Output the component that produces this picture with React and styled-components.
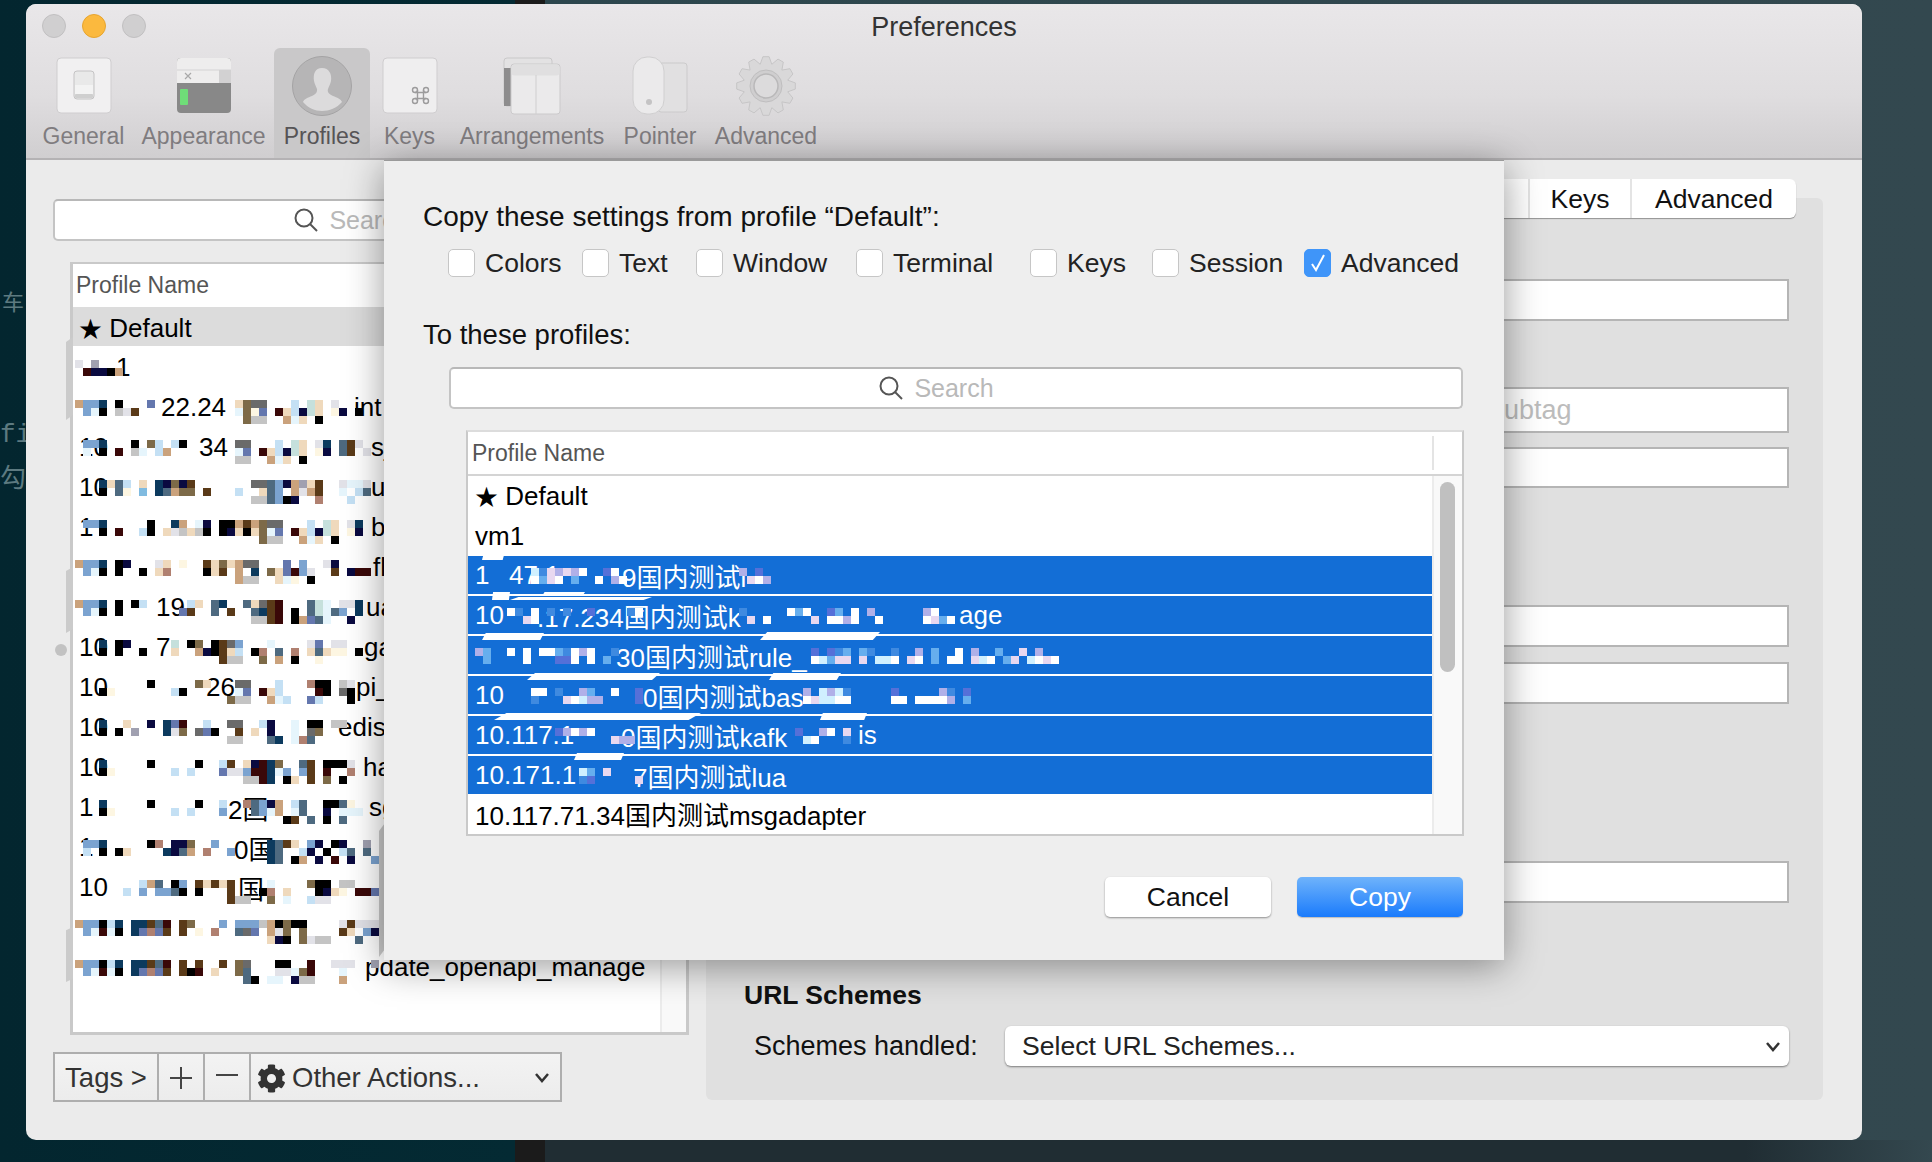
import React from 'react';
import styled, { createGlobalStyle } from 'styled-components';
import { FaCog } from 'react-icons/fa';

const Global = createGlobalStyle`
  html, body { margin: 0; padding: 0; }
  body { width: 1932px; height: 1162px; overflow: hidden; font-family: "Liberation Sans", "Noto Sans CJK SC", "DejaVu Sans", sans-serif; }
  * { box-sizing: border-box; }
`;

const Desktop = styled.div`
  position: relative;
  width: 1932px;
  height: 1162px;
  overflow: hidden;
  background: linear-gradient(90deg, #03262f 0, #042a33 515px, #1b1b1b 515px, #1b1b1b 545px, #2c464d 545px, #33484f 1932px);
  &::after {
    content: "";
    position: absolute;
    left: 545px;
    right: 0;
    bottom: 0;
    height: 22px;
    background: linear-gradient(90deg, #202d33 0, #202d33 1200px, #34484f 1387px);
  }
`;

const BackText = styled.span`
  position: absolute;
  left: ${p => p.$x}px;
  top: ${p => p.$y}px;
  color: #5d7a80;
  font-size: ${p => p.$size || 26}px;
  line-height: 30px;
  font-family: "Liberation Mono", "Noto Sans CJK SC", monospace;
`;

const Window = styled.div`
  position: absolute;
  left: 26px;
  top: 4px;
  width: 1836px;
  height: 1136px;
  border-radius: 10px;
  overflow: hidden;
  background: #ebebeb;
`;

const Chrome = styled.div`
  height: 156px;
  background: linear-gradient(180deg, #e9e7e9 0, #dfdddf 60%, #d0ced0 100%);
  border-bottom: 2px solid #b4b2b4;
`;

const TitleBar = styled.div`
  position: relative;
  height: 44px;
  display: flex;
  align-items: center;
  padding-left: 16px;
  gap: 16px;
`;

const Light = styled.div`
  width: 24px;
  height: 24px;
  margin-top: -1px;
  border-radius: 50%;
  background: ${p => p.$on ? '#fbb93e' : '#d0cfd0'};
  border: 1px solid ${p => p.$on ? '#e6a42f' : '#c0bfc0'};
`;

const Title = styled.div`
  position: absolute;
  left: 0;
  right: 0;
  top: 8px;
  text-align: center;
  font-size: 27px;
  line-height: 30px;
  color: #333;
`;

const Tools = styled.div`
  display: flex;
  padding-left: 8px;
  height: 110px;
`;

const Tool = styled.div`
  width: ${p => p.$w}px;
  display: flex;
  flex-direction: column;
  align-items: center;
  padding-top: 8px;
  border-radius: 6px 6px 0 0;
  background: ${p => p.$active ? '#c9c8c9' : 'transparent'};
  svg { display: block; }
`;

const ToolIcon = styled.div`
  height: 60px;
  display: flex;
  align-items: center;
  justify-content: center;
`;

const ToolLabel = styled.div`
  margin-top: 6px;
  font-size: 23px;
  line-height: 28px;
  white-space: nowrap;
  color: ${p => p.$active ? '#565456' : '#7f7c7f'};
`;

const Body = styled.div`
  display: flex;
  align-items: flex-start;
  padding-left: 27px;
`;

const LeftCol = styled.div`
  width: 636px;
  padding-top: 39px;
  flex: none;
`;

const SearchBox = styled.div`
  height: 42px;
  width: ${p => p.$w}px;
  margin: ${p => p.$mt || 0}px 0 0 ${p => p.$ml}px;
  padding-right: ${p => p.$pr || 0}px;
  background: #fff;
  border: 2px solid #c4c4c4;
  border-top-color: #b8b8b8;
  border-radius: 5px;
  display: flex;
  align-items: center;
  justify-content: center;
  gap: 10px;
  font-size: 25px;
  color: #b9b9b9;
`;

const ProfileTable = styled.div`
  margin: 21px 0 0 17px;
  width: 619px;
  height: 773px;
  border: 3px solid #c9c9c9;
  border-top-width: 2px;
  background: #fff;
  display: flex;
`;

const ListCol = styled.div`
  flex: 1;
  position: relative;
  min-width: 0;
`;

const Gutter = styled.div`
  width: 26px;
  flex: none;
  background: #f9f9f9;
  border-left: 2px solid #ececec;
`;

const HeadCell = styled.div`
  height: ${p => p.$h}px;
  padding-left: 3px;
  display: flex;
  align-items: center;
  font-size: 23px;
  color: #555;
`;

const Row = styled.div`
  position: relative;
  height: ${p => p.$h || 40}px;
  display: flex;
  align-items: center;
  padding: ${p => p.$down || 0}px 0 ${p => p.$up || 0}px;
  font-size: 26px;
  white-space: nowrap;
  color: ${p => p.$sel ? '#fff' : '#000'};
  background: ${p => p.$sel ? '#136ed6' : p.$dim ? '#dcdcdc' : 'transparent'};
  background-clip: padding-box;
  border-bottom: ${p => p.$sel ? '2px solid #fff' : '0'};
`;

const Frag = styled.span`
  flex: none;
  display: inline-block;
  width: ${p => p.$w}px;
`;

const Star = styled.span`
  font-size: 23px;
`;

const MosaicSvg = styled.svg`
  position: absolute;
  left: ${p => p.$left}px;
  top: ${p => p.$top}px;
  display: block;
`;

const Sliver = styled.div`
  position: absolute;
  left: ${p => p.$x}px;
  top: ${p => p.$y}px;
  width: ${p => p.$w}px;
  height: ${p => p.$h}px;
  background: #cbcbcb;
  clip-path: polygon(0 6%, 100% 0, 100% 94%, 0 100%);
`;

const Dot = styled.div`
  position: absolute;
  left: ${p => p.$x}px;
  top: ${p => p.$y}px;
  width: 12px;
  height: 12px;
  border-radius: 50%;
  background: #c2c2c2;
`;

const Slash = styled.div`
  position: absolute;
  left: ${p => p.$x}px;
  top: ${p => p.$y}px;
  width: ${p => p.$w}px;
  height: ${p => p.$h}px;
  background: #fff;
  clip-path: polygon(6% 0, 100% 0, 94% 100%, 0 100%);
`;

const ActionBar = styled.div`
  margin-top: 17px;
  width: 509px;
  height: 50px;
  display: flex;
  border: 2px solid #aeaeae;
  background: linear-gradient(180deg, #f3f3f3, #ececec);
`;

const ActionCell = styled.div`
  width: ${p => p.$w}px;
  flex: ${p => p.$grow ? 1 : 'none'};
  display: flex;
  align-items: center;
  justify-content: ${p => p.$grow ? 'flex-start' : 'center'};
  gap: 6px;
  padding: ${p => p.$grow ? '2px 10px 0 6px' : '2px 0 0'};
  border-right: ${p => p.$grow ? '0' : '2px solid #aeaeae'};
  font-size: 27.5px;
  color: #333;
`;

const Chevron = styled.svg`
  margin-left: auto;
  display: block;
`;

const RightBox = styled.div`
  margin: 38px 0 0 17px;
  width: 1117px;
  height: 902px;
  background: #e0e0e0;
  border-radius: 6px;
  display: flex;
  flex-direction: column;
  align-items: flex-end;
  padding-right: 34px;
`;

const TabGroup = styled.div`
  margin: -19px -7px 0 0;
  height: 39px;
  display: flex;
  background: #fff;
  border-radius: 6px;
  box-shadow: 0 1px 1px rgba(0, 0, 0, .35);
`;

const Tab = styled.div`
  width: ${p => p.$w}px;
  padding-top: 2px;
  display: flex;
  align-items: center;
  justify-content: center;
  font-size: 26.5px;
  color: #111;
  border-left: 2px solid #e4e4e4;
`;

const Field = styled.div`
  margin-top: ${p => p.$mt}px;
  width: 784px;
  height: ${p => p.$h}px;
  background: #fff;
  border: 2px solid #b5b5b5;
  padding-left: ${p => p.$pl || 0}px;
  display: flex;
  align-items: center;
  font-size: 27px;
  color: #bcbcbc;
`;

const SchemeHead = styled.div`
  margin-top: 77px;
  align-self: flex-start;
  margin-left: 38px;
  font-size: 26.5px;
  line-height: 30px;
  font-weight: bold;
  color: #111;
`;

const SchemeRow = styled.div`
  margin-top: 16px;
  align-self: stretch;
  display: flex;
  align-items: center;
  justify-content: space-between;
  padding-left: 48px;
  font-size: 27px;
  color: #111;
`;

const SchemeSelect = styled.div`
  width: 784px;
  height: 40px;
  background: #fff;
  border-radius: 6px;
  padding: 1px 8px 0 17px;
  display: flex;
  align-items: center;
  box-shadow: 0 1px 2px rgba(0, 0, 0, .45);
  font-size: 26.6px;
  color: #222;
`;

const Modal = styled.div`
  position: absolute;
  left: 358px;
  top: 156px;
  width: 1120px;
  height: 800px;
  padding: 41px 0 0 39px;
  background: #eee;
  border-top: 1px solid #9a9a9a;
  box-shadow: 0 6px 36px rgba(0, 0, 0, .4);
  font-size: 26.5px;
  color: #111;
`;

const Line = styled.div`
  font-size: ${p => p.$size}px;
  line-height: 30px;
  margin-top: ${p => p.$mt || 0}px;
`;

const Checks = styled.div`
  display: flex;
  margin: 17px 0 0 25px;
  height: 28px;
`;

const Check = styled.div`
  width: ${p => p.$w}px;
  flex: none;
  display: flex;
  align-items: center;
  gap: 10px;
  white-space: nowrap;
  color: #222;
`;

const Box = styled.div`
  width: 27px;
  height: 28px;
  flex: none;
  border-radius: 5px;
  background: ${p => p.$on ? '#3f95f9' : '#fff'};
  border: 1px solid ${p => p.$on ? '#3f95f9' : '#c6c6c6'};
  display: flex;
  align-items: center;
  justify-content: center;
`;

const CopyTable = styled.div`
  margin: 21px 0 0 43px;
  width: 998px;
  height: 406px;
  border: 2px solid #c9c9c9;
  border-top-color: #dcdcdc;
  background: #fff;
  display: flex;
  flex-direction: column;
`;

const CopyHead = styled.div`
  height: 44px;
  flex: none;
  display: flex;
  align-items: center;
  justify-content: space-between;
  padding-left: 4px;
  border-bottom: 2px solid #d4d4d4;
  font-size: 23px;
  color: #555;
`;

const HeadMark = styled.div`
  width: 30px;
  height: 34px;
  border-left: 2px solid #e4e4e4;
`;

const CopyBody = styled.div`
  flex: 1;
  display: flex;
  min-height: 0;
`;

const CopyRows = styled.div`
  flex: 1;
  position: relative;
`;

const ScrollCol = styled.div`
  width: 30px;
  flex: none;
  background: #f9f9f9;
  border-left: 2px solid #ececec;
  padding: 6px 0 0 6px;
`;

const Thumb = styled.div`
  width: 15px;
  height: 190px;
  border-radius: 8px;
  background: #c0c0c0;
`;

const Buttons = styled.div`
  margin-top: 41px;
  padding-right: 41px;
  display: flex;
  justify-content: flex-end;
  gap: 26px;
`;

const Button = styled.div`
  width: 166px;
  height: 40px;
  border-radius: 5px;
  display: flex;
  align-items: center;
  justify-content: center;
  color: ${p => p.$primary ? '#fff' : '#111'};
  background: ${p => p.$primary ? 'linear-gradient(180deg, #6fb3fb, #1a7bfc)' : '#fff'};
  box-shadow: ${p => p.$primary ? '0 1px 1px rgba(0,0,0,.2)' : '0 1px 2px rgba(0,0,0,.4)'};
`;

const palette = {
  a: '#caa27c', b: '#7ba3d0', c: '#0c3a5e', k: '#000', l: '#c4e0f4', w: '#e6f5fc', g: '#c4c4c4',
  d: '#3a0808', m: '#5a3a18', n: '#0a0a40', o: '#7d6a48', p: '#6477ae', s: '#4e6a80', t: '#efd9bc',
  u: '#c5e0dc', v: '#6a6a6a', y: '#fdf6e2', r: '#b08070', e: '#e2e2e8', h: '#a0a0b0', x: '#80bbe0',
  W: '#fff', L: '#66aeee', D: '#3f8ae0', V: '#e8d8f0', P: '#b0b0e8', I: '#5570d8', C: '#d0f0ff',
};

const Mosaic = ({ lines, left, top }) => {
  const cols = Math.max(...lines.map(l => l.length));
  return (
    <MosaicSvg $left={left} $top={top} width={cols * 8} height={lines.length * 8} shapeRendering="crispEdges">
      {lines.map((line, y) => line.split('').map((ch, x) => palette[ch]
        ? <rect key={x + '-' + y} x={x * 8} y={y * 8} width="8" height="8" fill={palette[ch]} />
        : null))}
    </MosaicSvg>
  );
};

const Frags = ({ items }) => {
  if (!items.length) return null;
  return (
    <>
      <Frag $w={items[0][0]} />
      {items.map((it, i) => (
        <Frag key={i} $w={i < items.length - 1 ? items[i + 1][0] - it[0] : 'auto'}>{it[1]}</Frag>
      ))}
    </>
  );
};

const DefaultName = () => <><Star>★</Star> Default</>;

const leftRows = [
  { f: [[43, '1']], m: ['e.h', '.dnnka'] },
  { f: [[88, '22.24'], [281, 'int']], m: ['abbc.k...p..........tovv...l.ut.e', '.bwk.gem............woyp.dtlnut.yn.k', '.....................ogg..awt.k'] },
  { f: [[6, '10'], [126, '34'], [298, 's_']], m: ['.bbc...k.ol.lk......vv...l.ut.ec.sme', '.w.k.d.gw.la........wp.dtlnut.yn.sm.e', '....................gg..awt.k'] },
  { f: [[6, '10'], [298, 'ul']], m: ['...ctsl.t.cnonm.......vvsbnahtm..ewwe', '...k.sy.x.csaoo.m...l..tsb.aeam..w.ls', '......................ggsbkn..r...l'] },
  { f: [[6, '1'], [298, 'ba']], m: ['.bbc.....k..ca.wn.kkamaovv...l.ut.ec', '...k.d..lk.tegtgk.kntktowp.dtlnut.yn', '.......................ogg..awt.k'] },
  { f: [[300, 'fl']], m: ['abbc.kn...et.y..mtotavv...p.b..en', '.bwk.k..k.tr....ktm.a.c.otpdbe..m.ndd', '....................agg..twy.k'] },
  { f: [[83, '19'], [293, 'ua']], m: ['abbc.k.kl.....lt.sc..stvmd...suw.eec', '.bwk.k.......pm..s.m..scmd.k.suwsb.c', '......................ggmd.kapsw..n'] },
  { f: [[6, '10'], [83, '7'], [291, 'ga']], m: ['...c.kn.....u.ko.kmvb...w....ep.ee', '...k.k..k...t..ankmtl.kr.s.r.tstyy.k', '..................mgg..o.a.k..y'] },
  { f: [[6, '10'], [133, '26'], [283, 'pi_a']], m: ['.........k.....ot...vv...l...rkk.ge', '...ky.......lk......wp.dtl....dk.vk', '...................ogg..awl..pl...k'] },
  { f: [[6, '10'], [265, 'edis']], m: ['...c..t..n.cpd..l..vv..ln..w.kk.gg', '...k.k.h...ceo.vpk..m.t.n..w.vo', '...................gg...sc.wrs'] },
  { f: [[6, '10'], [290, 'ha']], m: ['...c.....k.....k..lm.tndco..sm.kkke', '...ky.......l.l...peebddcwb.bm.d..r', '.....................ggdc.kt.m.o.k'] },
  { f: [[6, '1'], [155, '2国'], [296, 'sg']], m: ['...c.....k.....k..l..rsbna.ls..kksy', '...ky.......l.l...b...sbwa.ws..n.www', '..........................km.s.k.s'] },
  { f: [[6, '1'], [161, '0国']], m: ['.bbc.....kr.nno..b......csmt.bn.kn..h', '.l.k.kt....cnsa.r..b....cs..ln.k.ls.s', '........................cs.ka.n.d.n..b'] },
  { f: [[6, '10'], [165, '国']], m: ['........las.kb.mtmtm....w....okk.gg', '......l.b.bbsk.k...m...kr.t...knty.ddpn', '...................mgg..o.w..lee'] },
  { f: [], m: ['abbklc.ccmsd.mo...b.bbbgakokk....emeee', '.bwdwk.cprpm.m.y.r..svp.aeo.o....mt.bn', '........................tnk.oegg...s'] },
  { f: [[292, 'pdate_openapi_manage']], m: ['abbklc.ccmsd.m.m..m.ov...kk..d..eee..h', '.bwdwk.cprpm.mkd.t..os...eewod...w', '.....................sk.ww.ngg...a'] },
];

const blue = (f, m) => ({ f, m, sel: true });
const copyRows = [
  { f: [[7, <DefaultName />]], up: 2 },
  { f: [[7, 'vm1']] },
  blue([[7, '1'], [41, '47.1'], [154, '9国内测试i']], ['........CDVPVPW..IW...............P.I', '........WLVW.L..W.PW...............VWP']),
  blue([[7, '10'], [69, '.17.234国内测试k'], [491, 'age']], ['.....WD.W.D.D..I....DW............D.....WLW..IL.W.P......PW', '.......VW..........................V.W.....V.WWPW..W.....WVLW']),
  blue([[148, '30国内测试rule_']], ['.PL..W.W.WWLDWPW..D........................I.IDL.LD..D..P.L..W.P..L..V.P.', '..L....W...IIW.W.L.........................WCLVV.V.CCW.VW.L.WW.VCW.LV.CWVW']),
  blue([[7, '10'], [175, '0国内测试bas']], ['........WW.D..PL..W..I....................P.CPCD.....I.....PD.I', '........D...VWCPP....I....................WVCCWW.....WW.WWWWP.L']),
  blue([[7, '10.117.1'], [153, '0国内测试kafk'], [390, 'is']], ['...........IPWPW.........................I..PW.V', '..................VPP.....................CW...D']),
  blue([[7, '10.171.1'], [165, '7国内测试lua']], ['..............CL.V', '..............DI.....V']),
  { f: [[7, '10.117.71.34国内测试msgadapter']], up: 5 },
];

const slashes = [
  [14, 79, 22, 5], [24, 116, 18, 8], [42, 121, 142, 3], [74, 116, 43, 4], [14, 157, 62, 7], [292, 156, 120, 8],
  [59, 197, 133, 7], [301, 197, 72, 7], [26, 237, 207, 7], [352, 237, 47, 7], [106, 277, 50, 7],
];

const checks = [
  ['Colors', 134], ['Text', 114], ['Window', 160], ['Terminal', 174], ['Keys', 122], ['Session', 152], ['Advanced', 180, true],
];

const SearchIcon = () => (
  <svg width="26" height="26" viewBox="0 0 26 26" fill="none" stroke="#555" strokeWidth="2">
    <circle cx="11" cy="11" r="8.5" />
    <path d="M17 17l7 7" />
  </svg>
);

const GeneralIcon = () => (
  <svg width="56" height="58" viewBox="0 0 56 58">
    <rect x="1" y="1" width="54" height="55" rx="4" fill="#f1f0f1" stroke="#cfcdcf" />
    <rect x="18" y="14" width="20" height="28" rx="3" fill="#e9e9e9" stroke="#c4c3c4" />
    <rect x="19" y="28" width="18" height="9" fill="#f3f3f3" />
    <rect x="19" y="37" width="18" height="4" rx="1" fill="#cfcfcf" />
  </svg>
);

const AppearanceIcon = () => (
  <svg width="56" height="58" viewBox="0 0 56 58">
    <rect x="1" y="1" width="54" height="55" rx="4" fill="#888" />
    <path d="M1 26V5a4 4 0 0 1 4-4h46a4 4 0 0 1 4 4v21z" fill="#eeeded" />
    <path d="M1 13h54" stroke="#d4d3d4" />
    <rect x="43" y="13" width="12" height="13" fill="#d2d1d2" />
    <path d="M9 16l6 6M15 16l-6 6" stroke="#a8a8a8" strokeWidth="1.2" />
    <rect x="4" y="32" width="8" height="16" rx="1" fill="#6fdd78" />
  </svg>
);

const ProfileIcon = () => (
  <svg width="60" height="60" viewBox="0 0 60 60">
    <circle cx="30" cy="30" r="29.5" fill="#b6b5b6" stroke="#a4a3a4" />
    <path d="M30 12c-7 0-9 6-8 13 .5 3 2 5 3 8 .5 3-1 5-5 7-4 1.500-8 3-9 6 5 6 12 9 19 9s15-3 20-9c-1-3-5-4.500-9-6-4-2-6-4-5-7 1-3 2.500-5 3-8 1-7-2-13-9-13z" fill="#dcdbdc" />
  </svg>
);

const KeysIcon = () => (
  <svg width="56" height="58" viewBox="0 0 56 58">
    <rect x="1" y="1" width="54" height="55" rx="4" fill="#efeeef" stroke="#cfcdcf" />
    <g fill="none" stroke="#9c9b9c" strokeWidth="1.400">
      <circle cx="33" cy="33" r="2.500" />
      <circle cx="44" cy="33" r="2.500" />
      <circle cx="33" cy="44" r="2.500" />
      <circle cx="44" cy="44" r="2.500" />
      <path d="M35.500 33v11M41.500 33v11M33 35.500h11M33 41.500h11" />
    </g>
  </svg>
);

const ArrangeIcon = () => (
  <svg width="58" height="58" viewBox="0 0 58 58">
    <rect x="1" y="1" width="48" height="48" rx="3" fill="#e3e2e3" stroke="#c9c8c9" />
    <rect x="1" y="11" width="10" height="38" fill="#8d8c8d" />
    <rect x="8" y="7" width="49" height="50" rx="3" fill="#ebeaeb" stroke="#cbcacb" />
    <rect x="8.500" y="7.500" width="48" height="11" rx="3" fill="#e0dfe0" />
    <path d="M33 18v39" stroke="#cfcecf" />
  </svg>
);

const PointerIcon = () => (
  <svg width="56" height="60" viewBox="0 0 56 60">
    <rect x="26" y="7" width="29" height="49" rx="3" fill="#e1e0e1" stroke="#cbcacb" />
    <rect x="1" y="1" width="31" height="57" rx="14" fill="#ebeaeb" stroke="#d0cfd0" />
    <circle cx="17" cy="46" r="3" fill="#c4c3c4" />
  </svg>
);

const gearPath = () => {
  const pts = [];
  const teeth = 12;
  for (let i = 0; i < teeth; i++) {
    const a = (i / teeth) * Math.PI * 2;
    const step = Math.PI * 2 / teeth;
    [[-.5, 22.5], [-.2, 29.5], [.2, 29.5], [.5, 22.5]].forEach(([o, r]) => {
      const t = a + o * step;
      pts.push((30 + Math.cos(t) * r).toFixed(1) + ' ' + (30 + Math.sin(t) * r).toFixed(1));
    });
  }
  return 'M' + pts.join('L') + 'Z';
};

const GearIcon = () => (
  <svg width="60" height="60" viewBox="0 0 60 60">
    <path d={gearPath()} fill="#d9d8d9" stroke="#c6c5c6" />
    <circle cx="30" cy="30" r="16" fill="#cfcecf" stroke="#bfbebf" />
    <circle cx="30" cy="30" r="12" fill="#dcdbdc" stroke="#b9b8b9" strokeWidth="1.500" />
  </svg>
);

const tools = [
  ['General', 99, <GeneralIcon />], ['Appearance', 141, <AppearanceIcon />], ['Profiles', 96, <ProfileIcon />, true],
  ['Keys', 79, <KeysIcon />], ['Arrangements', 166, <ArrangeIcon />], ['Pointer', 90, <PointerIcon />], ['Advanced', 122, <GearIcon />],
];

const DownChevron = () => (
  <Chevron width="16" height="12" viewBox="0 0 16 12" fill="none" stroke="#333" strokeWidth="2.500">
    <path d="M2 2l6 7 6-7" />
  </Chevron>
);

const App = () => (
  <Desktop>
    <Global />
    <BackText $x={2} $y={290} $size={22}>车</BackText>
    <BackText $x={0} $y={420}>fi</BackText>
    <BackText $x={0} $y={465}>勾</BackText>
    <Window>
      <Chrome>
        <TitleBar>
          <Light />
          <Light $on />
          <Light />
          <Title>Preferences</Title>
        </TitleBar>
        <Tools>
          {tools.map(([name, w, icon, active]) => (
            <Tool key={name} $w={w} $active={active}>
              <ToolIcon>{icon}</ToolIcon>
              <ToolLabel $active={active}>{name}</ToolLabel>
            </Tool>
          ))}
        </Tools>
      </Chrome>
      <Body>
        <LeftCol>
          <SearchBox $w={596} $ml={0}><SearchIcon />Search</SearchBox>
          <ProfileTable>
            <ListCol>
              <HeadCell $h={43}>Profile Name</HeadCell>
              <Row $h={39} $dim><Frags items={[[6, <DefaultName />]]} /></Row>
              {leftRows.map((r, i) => (
                <Row key={i} $down={3}>
                  <Frags items={r.f} />
                  <Mosaic lines={r.m} left={2} top={14} />
                </Row>
              ))}
            </ListCol>
            <Gutter />
          </ProfileTable>
          <ActionBar>
            <ActionCell $w={104}>Tags &gt;</ActionCell>
            <ActionCell $w={46}>
              <svg width="24" height="24" viewBox="0 0 24 24" stroke="#444" strokeWidth="2"><path d="M12 1v22M1 12h22" /></svg>
            </ActionCell>
            <ActionCell $w={46}>
              <svg width="24" height="24" viewBox="0 0 24 24" stroke="#444" strokeWidth="2"><path d="M1 9h22" /></svg>
            </ActionCell>
            <ActionCell $grow><FaCog size={29} color="#333" />Other Actions...<DownChevron /></ActionCell>
          </ActionBar>
        </LeftCol>
        <RightBox>
          <TabGroup>
            <Tab $w={60} />
            <Tab $w={102}>Keys</Tab>
            <Tab $w={166}>Advanced</Tab>
          </TabGroup>
          <Field $mt={61} $h={42} />
          <Field $mt={66} $h={46} $pl={479}>Subtag</Field>
          <Field $mt={14} $h={41} />
          <Field $mt={117} $h={42} />
          <Field $mt={15} $h={42} />
          <Field $mt={157} $h={42} />
          <SchemeHead>URL Schemes</SchemeHead>
          <SchemeRow>
            Schemes handled:
            <SchemeSelect>Select URL Schemes...<DownChevron /></SchemeSelect>
          </SchemeRow>
        </RightBox>
      </Body>
      <Sliver $x={40} $y={333} $w={7} $h={83} />
      <Sliver $x={40} $y={563} $w={7} $h={66} />
      <Sliver $x={40} $y={923} $w={7} $h={55} />
      <Sliver $x={353} $y={819} $w={6} $h={134} />
      <Dot $x={29} $y={640} />
      <Dot $x={425} $y={623} />
      <Modal>
        <Line $size={28}>Copy these settings from profile “Default”:</Line>
        <Checks>
          {checks.map(([name, w, on]) => (
            <Check key={name} $w={w}>
              <Box $on={on}>
                {on && <svg width="16" height="20" viewBox="0 0 16 20" fill="none" stroke="#fff" strokeWidth="2"><path d="M2 11l4 6 8-15" /></svg>}
              </Box>
              {name}
            </Check>
          ))}
        </Checks>
        <Line $size={27.5} $mt={43}>To these profiles:</Line>
        <SearchBox $w={1014} $ml={26} $mt={17} $pr={40}><SearchIcon />Search</SearchBox>
        <CopyTable>
          <CopyHead>Profile Name<HeadMark /></CopyHead>
          <CopyBody>
            <CopyRows>
              {copyRows.map((r, i) => (
                <Row key={i} $sel={r.sel} $up={r.up}>
                  <Frags items={r.f} />
                  {r.m && <Mosaic lines={r.m} left={-1} top={12} />}
                </Row>
              ))}
              {slashes.map(([x, y, w, h], i) => <Slash key={i} $x={x} $y={y} $w={w} $h={h} />)}
            </CopyRows>
            <ScrollCol><Thumb /></ScrollCol>
          </CopyBody>
        </CopyTable>
        <Buttons>
          <Button>Cancel</Button>
          <Button $primary>Copy</Button>
        </Buttons>
      </Modal>
    </Window>
  </Desktop>
);

export default App;
